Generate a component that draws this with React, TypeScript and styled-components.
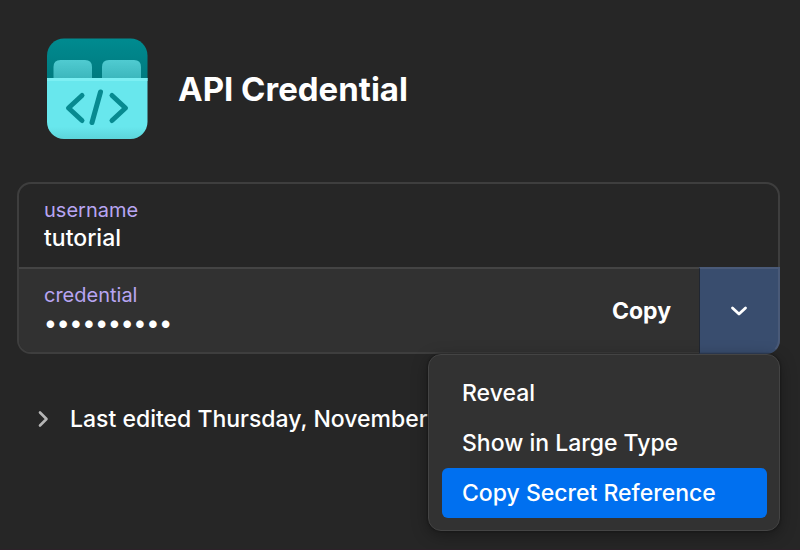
import React from "react";
import styled, { createGlobalStyle } from "styled-components";

const GlobalStyle = createGlobalStyle`
  *, *::before, *::after { box-sizing: border-box; }
  html { background: #262626; }
  body {
    margin: 0;
    min-height: 100vh;
    background: #262626;
    border-bottom: 1px solid #2d2129;
    color: #fff;
    font-family: Inter, "Liberation Sans", sans-serif;
    font-size: 23px;
    font-weight: 500;
    line-height: 28px;
    overflow: hidden;
  }
  button { font: inherit; color: inherit; border: 0; padding: 0; background: none; }
`;

const Page = styled.main`
  padding: 38px 20px 0 17px;
`;

const Header = styled.header`
  display: flex;
  align-items: center;
  gap: 30px;
  padding-left: 30px;
`;

const Title = styled.h1`
  margin: 0;
  font-size: 33px;
  line-height: 40px;
  font-weight: 700;
`;

const Card = styled.section`
  margin-top: 43px;
  border: 2px solid #3e3e3e;
  border-radius: 14px;
`;

const Field = styled.div<{ $active?: boolean }>`
  display: flex;
  height: ${(p) => (p.$active ? 85 : 83)}px;
  background: ${(p) => (p.$active ? "#313131" : "transparent")};
  border-top: ${(p) => (p.$active ? "2px solid #444" : "0")};
  border-radius: ${(p) => (p.$active ? "0 0 12px 12px" : "0")};
`;

const FieldText = styled.dl`
  flex: 1;
  margin: 0;
  padding: 12px 25px;
`;

const Label = styled.dt`
  color: #b8a5f2;
  font-size: 20px;
  font-weight: 400;
`;

const Value = styled.dd`
  margin: 0;
`;

const Dots = styled(Value)`
  font-size: 24px;
`;

const CopyButton = styled.button`
  padding: 0 28px;
  font-weight: 700;
`;

const MenuAnchor = styled.div`
  position: relative;
  display: flex;
  width: 81px;
  margin: -2px -2px -2px 0;
`;

const MenuToggle = styled.button`
  flex: 1;
  display: flex;
  align-items: center;
  justify-content: center;
  background: #394d6e;
  border: 2px solid #4a5a78;
  border-left: 1px solid #202631;
  border-bottom-color: #394d6e;
  border-radius: 0 0 14px 0;
`;

const Menu = styled.div`
  position: absolute;
  z-index: 1;
  top: 100%;
  right: 0;
  padding: 13px 12px 12px 13px;
  width: 352px;
  background: #323232;
  border: 1px solid #444;
  border-radius: 13px;
  box-shadow: 0 0 2px #111, 0 4px 16px rgba(0, 0, 0, 0.35);
`;

const MenuItem = styled.button<{ $selected?: boolean }>`
  display: block;
  width: 100%;
  height: 50px;
  padding: 0 20px;
  border-radius: 6px;
  text-align: left;
  background: ${(p) => (p.$selected ? "#0070f0" : "transparent")};
`;

const History = styled.button`
  display: flex;
  align-items: center;
  gap: 20px;
  margin-top: 51px;
  padding-left: 20px;
  white-space: nowrap;
`;

const CredentialIcon = () => (
  <svg width="101" height="101" viewBox="0 0 101 101" aria-hidden="true">
    <defs>
      <clipPath id="tile"><rect x="0" y="0.5" width="100.5" height="100.5" rx="17" /></clipPath>
      <linearGradient id="back" x1="0" y1="0" x2="0" y2="1">
        <stop offset="0" stopColor="#008b90" />
        <stop offset="1" stopColor="#007a7f" />
      </linearGradient>
      <linearGradient id="tab" x1="0" y1="0" x2="0" y2="1">
        <stop offset="0" stopColor="#50cbd1" />
        <stop offset="1" stopColor="#3bb6bc" />
      </linearGradient>
      <linearGradient id="front" x1="0" y1="0" x2="0" y2="1">
        <stop offset="0" stopColor="#68e7ed" />
        <stop offset="0.8" stopColor="#68e7ed" />
        <stop offset="1" stopColor="#5cd5da" />
      </linearGradient>
    </defs>
    <g clipPath="url(#tile)">
      <rect width="101" height="41" fill="url(#back)" />
      <path d="M6.500 41V29q0-7 7-7h24.500q7 0 7 7v12zM55 41V29q0-7 7-7h25q7 0 7 7v12z" fill="url(#tab)" />
      <rect y="40" width="101" height="61" fill="url(#front)" />
      <rect y="40" width="101" height="3" fill="#7ceff3" />
    </g>
    <path d="M35 57.500 21.500 70l13.500 12.500M65 57.500 78.500 70 65 82.500M53.500 54l-8.500 30.500" fill="none" stroke="#078a90" strokeWidth="5" strokeLinecap="round" strokeLinejoin="round" />
  </svg>
);

const App: React.FC = () => (
  <>
    <GlobalStyle />
    <Page>
      <Header>
        <CredentialIcon />
        <Title>API Credential</Title>
      </Header>
      <Card>
        <Field>
          <FieldText>
            <Label>username</Label>
            <Value>tutorial</Value>
          </FieldText>
        </Field>
        <Field $active>
          <FieldText>
            <Label>credential</Label>
            <Dots>••••••••••</Dots>
          </FieldText>
          <CopyButton type="button">Copy</CopyButton>
          <MenuAnchor>
            <MenuToggle type="button" aria-label="More actions" aria-haspopup="menu" aria-expanded="true">
              <svg width="18" height="12" viewBox="0 0 18 12" aria-hidden="true">
                <path d="m2.500 3 6.500 6 6.500-6" fill="none" stroke="#fff" strokeWidth="2.800" strokeLinecap="round" strokeLinejoin="round" />
              </svg>
            </MenuToggle>
            <Menu role="menu">
              <MenuItem type="button" role="menuitem">Reveal</MenuItem>
              <MenuItem type="button" role="menuitem">Show in Large Type</MenuItem>
              <MenuItem type="button" role="menuitem" $selected>Copy Secret Reference</MenuItem>
            </Menu>
          </MenuAnchor>
        </Field>
      </Card>
      <History type="button" aria-expanded="false">
        <svg width="13" height="18" viewBox="0 0 13 18" aria-hidden="true">
          <path d="m3 2.500 6.500 6.500L3 15.500" fill="none" stroke="#b5b5b5" strokeWidth="2.600" strokeLinecap="round" strokeLinejoin="round" />
        </svg>
        Last edited Thursday, November
      </History>
    </Page>
  </>
);

export default App;
